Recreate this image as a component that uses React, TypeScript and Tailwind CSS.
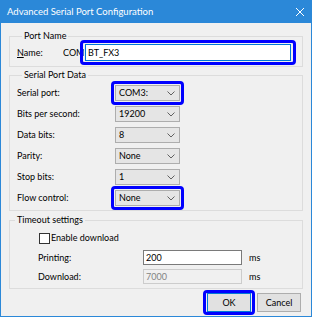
import type { ReactNode } from "react";

const BLUE = "border-[#0000ff]";

function Highlight({ inset }: { inset: string }) {
  // annotation ring drawn over a control
  return (
    <span
      className={`pointer-events-none absolute rounded-[4px] border-[3px] ${BLUE} ${inset}`}
    />
  );
}

function Chevron() {
  return (
    <svg width="8" height="5" viewBox="0 0 8 5" className="shrink-0">
      <polyline
        points="0.5,0.5 4,4 7.5,0.5"
        fill="none"
        stroke="#606060"
        strokeWidth="1"
      />
    </svg>
  );
}

function Combo({ value, ring }: { value: string; ring?: boolean }) {
  return (
    <div className="relative flex h-[16px] w-[65px] items-center justify-between border border-[#adadad] bg-[#e5e5e5] pl-[3px] pr-[4px]">
      <span>{value}</span>
      <Chevron />
      {ring && <Highlight inset="-inset-[5px]" />}
    </div>
  );
}

function Group({
  title,
  className,
  children,
}: {
  title: string;
  className: string;
  children: ReactNode;
}) {
  return (
    <fieldset className={`border border-[#dcdcdc] ${className}`}>
      <legend className="ml-[5px] px-[2px] leading-[12px]">{title}</legend>
      {children}
    </fieldset>
  );
}

const rows: { label: string; value: string; ring?: boolean }[] = [
  { label: "Serial port:", value: "COM3:", ring: true },
  { label: "Bits per second:", value: "19200" },
  { label: "Data bits:", value: "8" },
  { label: "Parity:", value: "None" },
  { label: "Stop bits:", value: "1" },
  { label: "Flow control:", value: "None", ring: true },
];

export default function App() {
  return (
    <div className="flex h-[317px] w-[312px] flex-col border-x border-b border-[#2b88d8] bg-[#f0f0f0] font-['Lato',sans-serif] text-[9px] leading-[12px] text-black">
      <div className="flex h-[23px] shrink-0 items-center justify-between bg-[#2b88d8] pl-[6px] pr-[7px] text-[9.5px] text-white">
        <span>Advanced Serial Port Configuration</span>
        <svg width="8" height="8" viewBox="0 0 8 8">
          <path d="M0 0 L8 8 M8 0 L0 8" stroke="#fff" strokeWidth="1" />
        </svg>
      </div>

      <div className="flex flex-col px-[8px]">
        <Group title="Port Name" className="mt-[7px] pb-[5px] pl-[7px] pr-[11px]">
          <div className="mt-[2px] flex items-center">
            <span className="w-[46px]">
              <span className="underline">N</span>ame:
            </span>
            <span className="w-[22px] overflow-hidden whitespace-nowrap">COM</span>
            <div className="relative flex-1">
              <div className="flex h-[17px] items-center border border-[#0078d7] bg-white pl-[2px]">
                BT_FX3
              </div>
              <Highlight inset="-inset-x-[5px] -inset-y-[4px]" />
            </div>
          </div>
        </Group>

        <Group title="Serial Port Data" className="mt-[2px] pb-[4px] pl-[7px]">
          <div className="mt-[4px] flex flex-col gap-[5px]">
            {rows.map((r) => (
              <div key={r.label} className="flex items-center">
                <span className="w-[98px]">{r.label}</span>
                <Combo value={r.value} ring={r.ring} />
              </div>
            ))}
          </div>
        </Group>

        <Group title="Timeout settings" className="mt-[3px] pb-[4px]">
          <div className="pl-[28px]">
            <label className="mt-[6px] flex h-[12px] items-center gap-[1px] pl-[1px]">
              <span className="h-[11px] w-[11px] border border-[#333] bg-white" />
              <span>Enable download</span>
            </label>
            <div className="mt-[6px] flex items-center">
              <span className="w-[105px]">Printing:</span>
              <div className="flex h-[15px] w-[99px] items-center border border-[#7a7a7a] bg-white pl-[2px]">
                200
              </div>
              <span className="ml-[7px]">ms</span>
            </div>
            <div className="mt-[4px] flex items-center">
              <span className="w-[105px]">Download:</span>
              <div className="flex h-[15px] w-[99px] items-center border border-[#cccccc] bg-[#f0f0f0] pl-[2px] text-[#838383]">
                7000
              </div>
              <span className="ml-[7px]">ms</span>
            </div>
          </div>
        </Group>

        <div className="mr-[2px] mt-[4px] flex justify-end gap-[6px]">
          <button
            type="button"
            className="relative h-[19px] w-[44px] border border-[#0078d7] bg-[#e1e1e1]"
          >
            OK
            <Highlight inset="-inset-x-[5px] -inset-y-[4px]" />
          </button>
          <button
            type="button"
            className="h-[19px] w-[44px] border border-[#adadad] bg-[#e1e1e1]"
          >
            Cancel
          </button>
        </div>
      </div>
    </div>
  );
}
